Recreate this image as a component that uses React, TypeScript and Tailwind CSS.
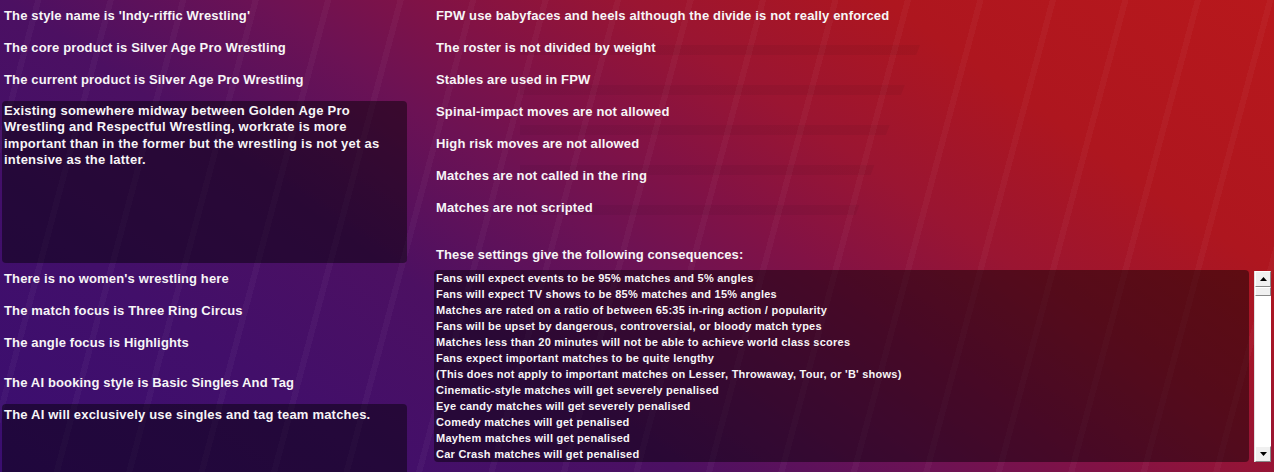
import React from "react";

const leftTop = [
  "The style name is 'Indy-riffic Wrestling'",
  "The core product is Silver Age Pro Wrestling",
  "The current product is Silver Age Pro Wrestling",
];
const leftMid = [
  "There is no women's wrestling here",
  "The match focus is Three Ring Circus",
  "The angle focus is Highlights",
];
const rightRows = [
  "FPW use babyfaces and heels although the divide is not really enforced",
  "The roster is not divided by weight",
  "Stables are used in FPW",
  "Spinal-impact moves are not allowed",
  "High risk moves are not allowed",
  "Matches are not called in the ring",
  "Matches are not scripted",
];
const consequences = [
  "Fans will expect events to be 95% matches and 5% angles",
  "Fans will expect TV shows to be 85% matches and 15% angles",
  "Matches are rated on a ratio of between 65:35 in-ring action / popularity",
  "Fans will be upset by dangerous, controversial, or bloody match types",
  "Matches less than 20 minutes will not be able to achieve world class scores",
  "Fans expect important matches to be quite lengthy",
  "(This does not apply to important matches on Lesser, Throwaway, Tour, or 'B' shows)",
  "Cinematic-style matches will get severely penalised",
  "Eye candy matches will get severely penalised",
  "Comedy matches will get penalised",
  "Mayhem matches will get penalised",
  "Car Crash matches will get penalised",
];

function Row({ children }: { children: React.ReactNode }) {
  return (
    <div className="h-[32px] flex items-center text-[13px] leading-[16px] font-bold tracking-[0.15px]">
      {children}
    </div>
  );
}

export default function App() {
  return (
    <div
      className="relative w-[1274px] h-[472px] overflow-hidden text-[#f7f5f7]"
      style={{ fontFamily: '"Liberation Sans", Arial, sans-serif' }}
    >
      {/* background */}
      <div className="absolute inset-0 bg-[linear-gradient(35deg,#3a0e70_0%,#420f6a_20%,#4c1062_35%,#6c1254_48%,#821245_57%,#9a1532_67%,#ae161f_80%,#b8181c_100%)]" />
      <div className="absolute inset-0 bg-[repeating-linear-gradient(105deg,transparent_0px,transparent_34px,rgba(255,255,255,0.03)_34px,rgba(255,255,255,0.03)_40px,transparent_40px,transparent_70px)]" />
      <div className="absolute left-[520px] top-[45px] w-[400px] h-[190px] bg-[repeating-linear-gradient(180deg,rgba(0,0,0,0.05)_0px,rgba(0,0,0,0.05)_10px,transparent_10px,transparent_40px)] [clip-path:polygon(0_0,100%_0,82%_100%,0_100%)]" />

      <div className="relative flex">
        {/* Left column */}
        <div className="w-[407px] flex flex-col">
          <div className="pl-[4px]">
            {leftTop.map((t) => (
              <Row key={t}>{t}</Row>
            ))}
          </div>
          <div className="ml-[2px] mt-[5px] h-[162px] rounded-[4px] bg-black/45 pl-[2px] pr-[22px] pt-[2px] text-[13px] leading-[16.3px] font-bold tracking-[0.25px]">
            Existing somewhere midway between Golden Age Pro Wrestling and Respectful Wrestling, workrate is more important than in the former but the wrestling is not yet as intensive as the latter.
          </div>
          <div className="pl-[4px]">
            {leftMid.map((t) => (
              <Row key={t}>{t}</Row>
            ))}
          </div>
          <div className="pl-[4px] mt-[8px]">
            <Row>The AI booking style is Basic Singles And Tag</Row>
          </div>
          <div className="ml-[2px] mt-[5px] h-[100px] rounded-[4px] bg-black/45 px-[2px] pt-[3px] text-[13px] leading-[16px] font-bold tracking-[0.2px]">
            The AI will exclusively use singles and tag team matches.
          </div>
        </div>

        {/* Right column */}
        <div className="ml-[27px] flex-1 flex flex-col">
          <div className="pl-[2px]">
            {rightRows.map((t) => (
              <Row key={t}>{t}</Row>
            ))}
          </div>
          <div className="pl-[2px] h-[46px] flex items-end pb-[7px] text-[13px] leading-[16px] font-bold tracking-[0.1px]">
            These settings give the following consequences:
          </div>
          <div className="flex">
            <div className="w-[815px] h-[192px] rounded-[4px] bg-black/45 px-[2px] text-[11px] leading-[16px] font-bold tracking-[0.25px] overflow-hidden">
              {consequences.map((c) => (
                <div key={c} className="h-[16px] flex items-center whitespace-nowrap">
                  {c}
                </div>
              ))}
            </div>
            {/* scrollbar */}
            <div className="ml-[5px] mt-[1px] w-[17px] h-[191px] bg-white flex flex-col justify-between border-l border-[#e0e0e0]">
              <div>
                <div className="h-[16px] bg-[#f0f0f0] border border-t-white border-l-white border-r-[#888] border-b-[#888] flex items-center justify-center">
                  <svg width="7" height="4" viewBox="0 0 7 4">
                    <polygon points="3.5,0 7,4 0,4" fill="#000" />
                  </svg>
                </div>
                <div className="h-[9px] bg-[#f0f0f0] border border-t-white border-l-white border-r-[#888] border-b-[#888]" />
              </div>
              <div className="h-[16px] bg-[#f0f0f0] border border-t-white border-l-white border-r-[#888] border-b-[#888] flex items-center justify-center">
                <svg width="7" height="4" viewBox="0 0 7 4">
                  <polygon points="0,0 7,0 3.5,4" fill="#000" />
                </svg>
              </div>
            </div>
          </div>
        </div>
      </div>
    </div>
  );
}
